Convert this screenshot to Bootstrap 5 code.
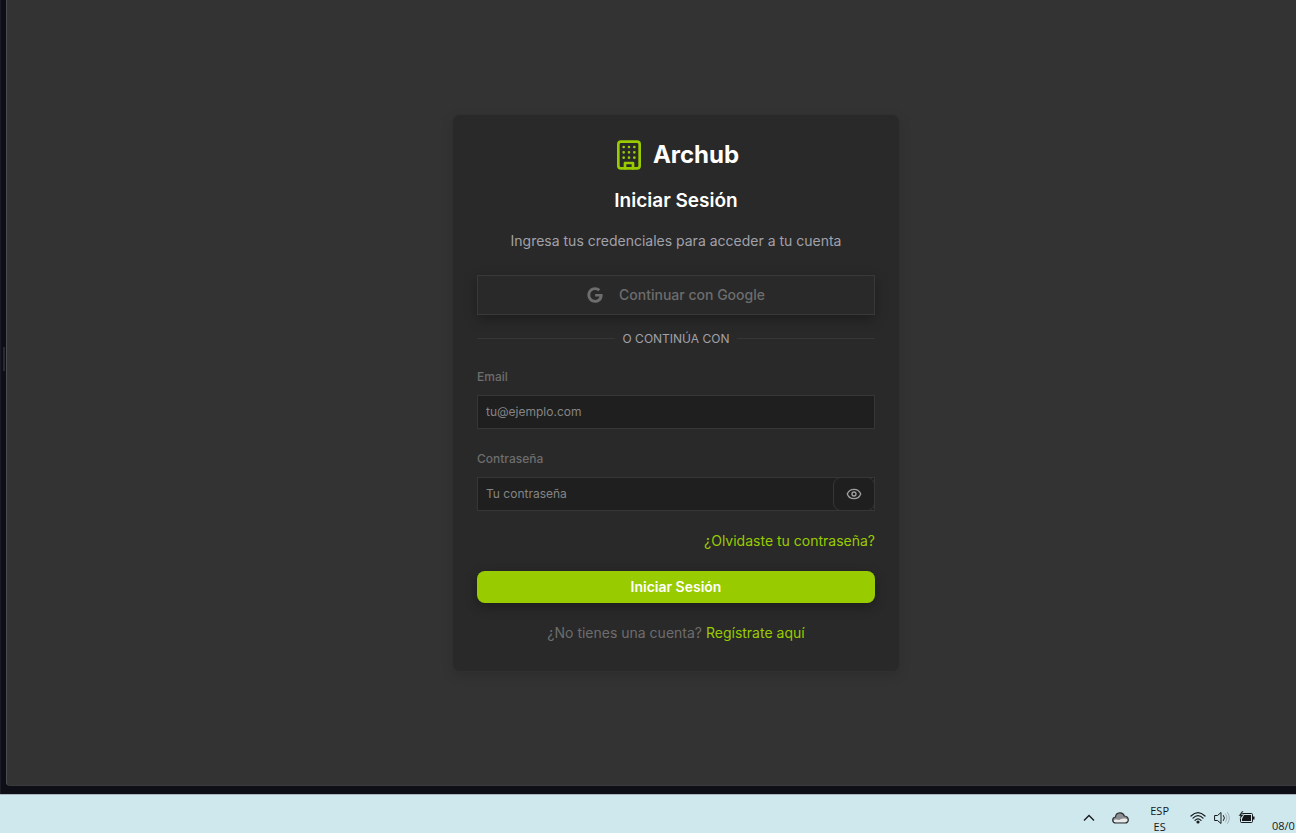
<!DOCTYPE html>
<html lang="es">
<head>
<meta charset="utf-8">
<meta name="viewport" content="width=device-width, initial-scale=1">
<title>Archub - Iniciar Sesión</title>
<link rel="stylesheet" href="https://cdn.jsdelivr.net/npm/bootstrap@5.3.0/dist/css/bootstrap.min.css">
<style>
:root { --lime: #99cc00; --line: #363636; --panel: #292929; --field: #1f1f1f; }
body { font-family: Inter, "Liberation Sans", sans-serif; font-size: 14px; line-height: 20px; background: #0e0e17; color: #fff; overflow: hidden; }
.shell { padding: 0 0 8px 2px; background: #0e0e17; border-left: 1px solid #1b1b25; }
.grip { width: 3px; padding-bottom: 68px; }
.grip span { width: 2px; height: 24px; background: #292933; }
.viewport-area { background: #333; border-left: 1px solid #4b4b50; border-bottom: 1px solid #3a3a3c; border-bottom-left-radius: 4px; padding-left: 49px; }
.login-card { width: 448px; max-width: 100%; padding: 24px; background: var(--panel); border: 1px solid #303030; border-radius: 8px; box-shadow: 0 4px 12px rgba(0,0,0,.12); }
.brand-name { font-size: 24px; line-height: 32px; font-weight: 700; }
.login-title { font-size: 19px; line-height: 28px; font-weight: 600; }
.subtitle { color: #a1a1aa; }
.btn-google { height: 40px; border: 1px solid #393939; border-radius: 0; background: var(--panel); color: #6d6d6d; font-size: 14px; line-height: 20px; font-weight: 500; box-shadow: 0 4px 12px rgba(0,0,0,.3); }
.divider { font-size: 12px; line-height: 16px; color: #a1a1aa; }
.divider::before, .divider::after { content: ""; flex: 1; height: 1px; background: var(--line); }
.field-block { margin-top: 22px; }
.field-label { font-size: 12px; line-height: 16px; font-weight: 500; color: #6d6d6d; margin-bottom: 10px; }
.field { height: 34px; padding: 0 8px; background: var(--field); border: 1px solid var(--line); border-radius: 0; font-size: 12px; color: #fff; }
.field:focus { background: var(--field); color: #fff; }
.field::placeholder { color: #858585; opacity: 1; }
.btn-eye { width: 42px; border: 1px solid var(--line); border-radius: 8px; color: #a1a1a1; background: var(--field); }
.lime-link { color: var(--lime); text-decoration: none; }
.form-links { margin: 20px 0; }
.btn-login { height: 32px; background: var(--lime); color: #fff; border: 0; border-radius: 8px; font-size: 14px; line-height: 20px; font-weight: 600; box-shadow: 0 4px 12px rgba(0,0,0,.3); }
.signup { color: #6d6d6d; margin: 20px 0 4px; }
.taskbar { height: 39px; background: #cfe8ee; border-top: 1px solid #a9b4bf; color: #15191b; font-family: "Open Sans", "Noto Sans", sans-serif; font-size: 11px; line-height: 16px; }
.tray-btn { border: 0; background: none; padding: 0; color: inherit; }
.tray { gap: 17px; padding-top: 8px; }
.status-group { gap: 8px; }
.status-group, .tray-glyph { padding-top: 7px; }
.clock { width: 24px; margin-top: 15px; white-space: nowrap; }
</style>
</head>
<body>
<div class="d-flex flex-column vh-100">
  <div class="shell d-flex flex-grow-1">
    <div class="grip d-flex align-items-center"><span></span></div>
    <main class="viewport-area flex-grow-1 d-flex align-items-center justify-content-center">
      <section class="login-card">
        <div class="d-flex justify-content-center align-items-center gap-2 mb-3">
          <svg width="32" height="32" viewBox="0 0 24 24" fill="none" stroke="#99cc00" stroke-width="2" stroke-linecap="round" stroke-linejoin="round" aria-hidden="true"><rect x="4" y="2" width="16" height="20" rx="2"/><path d="M9 22v-4h6v4M8 6h.01M16 6h.01M12 6h.01M12 10h.01M12 14h.01M16 10h.01M16 14h.01M8 10h.01M8 14h.01"/></svg>
          <span class="brand-name">Archub</span>
        </div>
        <h1 class="login-title text-center mb-3">Iniciar Sesión</h1>
        <p class="subtitle text-center mb-4">Ingresa tus credenciales para acceder a tu cuenta</p>
        <button type="button" class="btn btn-google w-100 d-flex align-items-center justify-content-center gap-3 mb-3">
          <svg width="16" height="16" viewBox="0 0 488 512" fill="currentColor" aria-hidden="true"><path d="M488 261.8C488 403.3 391.1 504 248 504 110.8 504 0 393.2 0 256S110.8 8 248 8c66.8 0 123 24.5 166.3 64.9l-67.5 64.9C258.5 52.6 94.3 116.6 94.3 256c0 86.5 69.1 156.6 153.7 156.6 98.2 0 135-70.4 140.8-106.9H248v-85.3h236.1c2.3 12.7 3.9 24.9 3.9 41.4z"/></svg>
          Continuar con Google
        </button>
        <div class="divider d-flex align-items-center gap-2">O CONTINÚA CON</div>
        <form>
          <div class="field-block">
            <label class="field-label d-block" for="email">Email</label>
            <input class="form-control field" id="email" type="email" placeholder="tu@ejemplo.com">
          </div>
          <div class="field-block">
            <label class="field-label d-block" for="password">Contraseña</label>
            <div class="position-relative">
              <input class="form-control field" id="password" type="password" placeholder="Tu contraseña">
              <button type="button" class="btn-eye position-absolute top-0 end-0 h-100 d-flex align-items-center justify-content-center p-0" aria-label="Mostrar contraseña">
                <svg width="16" height="16" viewBox="0 0 24 24" fill="none" stroke="currentColor" stroke-width="2" stroke-linecap="round" stroke-linejoin="round"><path d="M2.06 12.35a1 1 0 0 1 0-.7 10.75 10.75 0 0 1 19.88 0 1 1 0 0 1 0 .7 10.75 10.75 0 0 1-19.88 0"/><circle cx="12" cy="12" r="3"/></svg>
              </button>
            </div>
          </div>
          <div class="form-links text-end"><a class="lime-link" href="#">¿Olvidaste tu contraseña?</a></div>
          <button type="submit" class="btn btn-login w-100 py-0">Iniciar Sesión</button>
        </form>
        <p class="signup text-center">¿No tienes una cuenta? <a class="lime-link" href="#">Regístrate aquí</a></p>
      </section>
    </main>
  </div>
  <footer class="taskbar overflow-hidden">
    <div class="tray d-flex justify-content-end">
      <button type="button" class="tray-btn tray-glyph d-flex" aria-label="Mostrar iconos ocultos">
        <svg width="12" height="16" viewBox="0 0 12 16" fill="none" stroke="currentColor" stroke-width="1.3"><path d="M1 10.5l5-5 5 5"/></svg>
      </button>
      <button type="button" class="tray-btn tray-glyph d-flex" aria-label="El tiempo">
        <svg width="17" height="16" viewBox="0 0 17 16"><path d="M4 13C-.3 13-.3 7.500 3.500 7C4 2 11 1.500 12.300 6C17.500 6.500 17.500 13 13 13z" fill="#8b8e90"/><path d="M4 12.800C1 12.800 .8 10 3.500 9.500C5.500 9.500 6 9.800 7.500 10C9 8 15.500 8 15.800 10C15.800 12 14.500 12.800 13 12.800z" fill="#e9e9e9"/><path d="M4 13C-.3 13-.3 7.500 3.500 7C4 2 11 1.500 12.300 6C17.500 6.500 17.500 13 13 13z" fill="none" stroke="#2b2f31" stroke-width="1.2"/></svg>
      </button>
      <button type="button" class="tray-btn text-center px-1 align-self-start">ESP<br>ES</button>
      <button type="button" class="tray-btn status-group d-flex" aria-label="Red, sonido y batería">
        <svg width="16" height="16" viewBox="0 0 16 16" fill="none" stroke="currentColor" stroke-width="1.2" stroke-linecap="round"><path d="M1 6Q8-.8 15 6M3 8.200Q8 3.200 13 8.200M5 10.300Q8 7.300 11 10.300"/><circle cx="8" cy="12" r="1" fill="currentColor"/></svg>
        <svg width="16" height="16" viewBox="0 0 16 16" fill="none" stroke="currentColor" stroke-linecap="round" stroke-linejoin="round"><path d="M1 5.500h2.500L7 2.500v11L3.500 10.500H1zM9.500 5.500q2 2.500 0 5"/><path d="M11.500 4q3 4 0 8M13.500 2.500q4 5.500 0 11" stroke="#a3b4b9"/></svg>
        <svg width="17" height="16" viewBox="0 0 17 16"><rect x="2.500" y="3.500" width="12" height="9" rx="1" fill="none" stroke="currentColor"/><path d="M6 5h7v6H4V9zM15 6.500h1.500v3H15z" fill="currentColor"/><path d="M4 1L.5 6h2L1.500 9.500 6 4.500H3.500L5.500 1z" fill="currentColor" stroke="#cfe8ee" stroke-width=".4"/></svg>
      </button>
      <span class="clock">08/0</span>
    </div>
  </footer>
</div>
<script src="https://cdn.jsdelivr.net/npm/bootstrap@5.3.0/dist/js/bootstrap.bundle.min.js"></script>
</body>
</html>
